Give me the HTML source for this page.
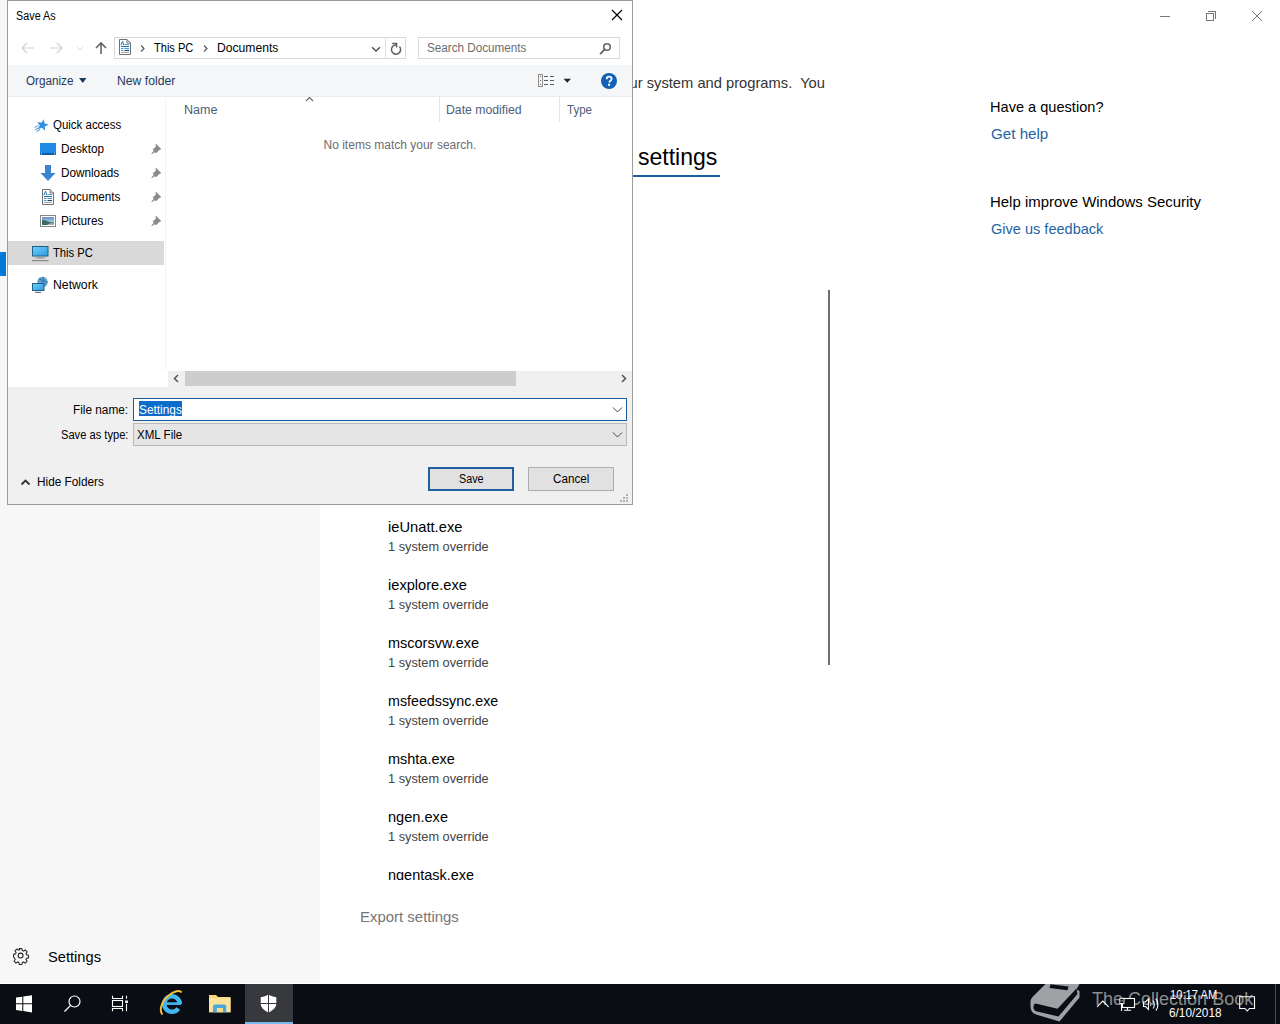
<!DOCTYPE html>
<html><head><meta charset="utf-8">
<style>
*{margin:0;padding:0;box-sizing:border-box}
html,body{width:1280px;height:1024px;overflow:hidden;background:#fff;font-family:"Liberation Sans",sans-serif}
.a{position:absolute}
.t{position:absolute;white-space:pre;line-height:1;transform-origin:0 0;font-family:"Liberation Sans",sans-serif}
svg{position:absolute;overflow:visible}
</style></head><body>
<!-- ============ Settings app ============ -->
<div class="a" style="left:0;top:0;width:320px;height:983px;background:#f7f7f7"></div>
<div class="a" style="left:0;top:252px;width:6px;height:24px;background:#0078d7"></div>
<!-- window controls -->
<div class="a" style="left:1160px;top:16px;width:10px;height:1px;background:#777"></div>
<div class="a" style="left:1206px;top:13px;width:8px;height:8px;border:1px solid #777"></div>
<div class="a" style="left:1208px;top:11px;width:8px;height:8px;border-top:1px solid #777;border-right:1px solid #777"></div>
<svg style="left:1252px;top:11px" width="10" height="10"><path d="M0 0L10 10M10 0L0 10" stroke="#777" stroke-width="1"/></svg>
<!-- heading underline -->
<div class="a" style="left:632px;top:175px;width:88px;height:2px;background:#1b5fa3"></div>
<!-- scrollbar -->
<div class="a" style="left:828px;top:290px;width:2px;height:375px;background:#6d6d6d"></div>
<!-- gear -->
<svg style="left:13.3px;top:948.2px" width="15.2" height="15.2" viewBox="0 0 16 16">
<path d="M6.6 0.6h2.8l0.4 2.1 1.3 0.6 1.8-1.2 2 2-1.2 1.8 0.6 1.3 2.1 0.4v2.8l-2.1 0.4-0.6 1.3 1.2 1.8-2 2-1.8-1.2-1.3 0.6-0.4 2.1H6.6l-0.4-2.1-1.3-0.6-1.8 1.2-2-2 1.2-1.8-0.6-1.3L0.6 9.4V6.6l2.1-0.4 0.6-1.3L2.1 3.1l2-2 1.8 1.2 1.3-0.6z" fill="none" stroke="#222" stroke-width="1.1" stroke-linejoin="round"/>
<circle cx="8" cy="8" r="2.6" fill="none" stroke="#222" stroke-width="1.1"/>
</svg>
<div class="t" style="left:613.75px;top:74.5px;font-size:15px;color:#333;transform:scaleX(0.9807);">your system and programs.  You</div>
<div class="t" style="left:638.14px;top:145px;font-size:24px;color:#000;transform:scaleX(0.9594);">settings</div>
<div class="t" style="left:990.43px;top:99px;font-size:15px;color:#000;transform:scaleX(0.9721);">Have a question?</div>
<div class="t" style="left:991.24px;top:126px;font-size:15px;color:#1f63a6;transform:scaleX(1.0106);">Get help</div>
<div class="t" style="left:990.40px;top:194px;font-size:15px;color:#000;transform:scaleX(0.9960);">Help improve Windows Security</div>
<div class="t" style="left:991.27px;top:220.5px;font-size:15px;color:#1f63a6;transform:scaleX(0.9697);">Give us feedback</div>
<div class="t" style="left:387.62px;top:519px;font-size:15px;color:#000;transform:scaleX(0.9807);">ieUnatt.exe</div>
<div class="t" style="left:387.81px;top:540px;font-size:13px;color:#444;transform:scaleX(0.9811);">1 system override</div>
<div class="t" style="left:387.62px;top:577px;font-size:15px;color:#000;transform:scaleX(0.9756);">iexplore.exe</div>
<div class="t" style="left:387.81px;top:598px;font-size:13px;color:#444;transform:scaleX(0.9811);">1 system override</div>
<div class="t" style="left:387.63px;top:635px;font-size:15px;color:#000;transform:scaleX(0.9661);">mscorsvw.exe</div>
<div class="t" style="left:387.81px;top:656px;font-size:13px;color:#444;transform:scaleX(0.9811);">1 system override</div>
<div class="t" style="left:387.64px;top:693px;font-size:15px;color:#000;transform:scaleX(0.9516);">msfeedssync.exe</div>
<div class="t" style="left:387.81px;top:714px;font-size:13px;color:#444;transform:scaleX(0.9811);">1 system override</div>
<div class="t" style="left:387.63px;top:751px;font-size:15px;color:#000;transform:scaleX(0.9652);">mshta.exe</div>
<div class="t" style="left:387.81px;top:772px;font-size:13px;color:#444;transform:scaleX(0.9811);">1 system override</div>
<div class="t" style="left:387.63px;top:809px;font-size:15px;color:#000;transform:scaleX(0.9721);">ngen.exe</div>
<div class="t" style="left:387.81px;top:830px;font-size:13px;color:#444;transform:scaleX(0.9811);">1 system override</div>
<div class="t" style="left:387.63px;top:867px;font-size:15px;color:#000;transform:scaleX(0.9648);">ngentask.exe</div>
<div class="t" style="left:359.50px;top:909px;font-size:15px;color:#767676;transform:scaleX(0.9963);">Export settings</div>
<div class="t" style="left:48.11px;top:949px;font-size:15px;color:#000;transform:scaleX(0.9784);">Settings</div>
<div class="a" style="left:380px;top:880px;width:140px;height:20px;background:#fff"></div>

<!-- ============ Dialog ============ -->
<div class="a" style="left:7px;top:0;width:626px;height:505px;background:#fff;border:1px solid #9b9b9b"></div>
<!-- toolbar band -->
<div class="a" style="left:8px;top:65px;width:624px;height:32px;background:#f5f6f7;border-bottom:1px solid #eaeaea"></div>
<!-- close X -->
<svg style="left:612px;top:10px" width="10" height="10"><path d="M0 0L10 10M10 0L0 10" stroke="#000" stroke-width="1.2"/></svg>
<!-- back / forward / recent / up -->
<svg style="left:20px;top:40px" width="100" height="16">
<path d="M2 8H14M2 8L7 3M2 8L7 13" fill="none" stroke="#d2d2d2" stroke-width="1.2"/>
<path d="M30 8H42M42 8L37 3M42 8L37 13" fill="none" stroke="#d2d2d2" stroke-width="1.2"/>
<path d="M57 7l3 3 3-3" fill="none" stroke="#d8d8d8" stroke-width="1"/>
<path d="M81 14V3M76 8L81 3L86 8" fill="none" stroke="#666" stroke-width="1.6"/>
</svg>
<!-- address box -->
<div class="a" style="left:114px;top:37px;width:292px;height:22px;border:1px solid #d9d9d9;background:#fff"></div>
<div class="a" style="left:385px;top:38px;width:1px;height:20px;background:#e3e3e3"></div>
<svg style="left:119px;top:39px" width="12" height="16" viewBox="0 0 12 16">
<path d="M0.5 0.5H8L11.5 4V15.5H0.5Z" fill="#fff" stroke="#707070" stroke-width="1"/>
<path d="M8 0.5V4H11.5" fill="none" stroke="#707070" stroke-width="1"/>
<path d="M1.8 6.2L3.6 2.2 4.6 6.2" fill="none" stroke="#2f78b0" stroke-width="1"/>
<path d="M5.5 5.5H10M2 9.5H4.5M5.5 9.5H10M2 11.5H4.5" stroke="#4a9ad0" stroke-width="1"/>
<path d="M2 7.5H10" stroke="#2a6f9e" stroke-width="1.1"/>
<path d="M5.5 11.5H10" stroke="#1d3f66" stroke-width="1.1"/>
<path d="M2 13.5H10" stroke="#8a8a8a" stroke-width="0.8"/>
</svg>
<svg style="left:139px;top:44px" width="80" height="10">
<path d="M2 1.5l3 3-3 3" fill="none" stroke="#555" stroke-width="1.2"/>
<path d="M65 1.5l3 3-3 3" fill="none" stroke="#555" stroke-width="1.2"/>
</svg>
<svg style="left:370px;top:44px" width="12" height="10" viewBox="370 44 12 10"><path d="M372 47.2L376 51 380 47.2" fill="none" stroke="#555" stroke-width="1.5"/></svg>
<svg style="left:385px;top:37px" width="20" height="20" viewBox="385 37 20 20">
<path d="M396 45A4.6 4.6 0 1 0 399.5 46.6" fill="none" stroke="#5f5f5f" stroke-width="1.5"/>
<path d="M392.2 43.6H396.6V47.6" fill="none" stroke="#5f5f5f" stroke-width="1.5"/>
</svg>
<!-- search box -->
<div class="a" style="left:418px;top:37px;width:202px;height:22px;border:1px solid #d9d9d9;background:#fff"></div>
<svg style="left:596px;top:40px" width="16" height="16" viewBox="596 40 16 16"><circle cx="607" cy="47" r="3.3" fill="none" stroke="#666" stroke-width="1.6"/><path d="M604.7 49.3L600.6 53.6" stroke="#666" stroke-width="1.9" stroke-linecap="round"/></svg>
<!-- toolbar items -->
<svg style="left:79px;top:78px" width="8" height="6"><path d="M0 0H7.5L3.75 5z" fill="#1e395b"/></svg>
<svg style="left:530px;top:66px" width="50" height="30" viewBox="530 66 50 30">
<rect x="538.5" y="74.5" width="4" height="12" fill="none" stroke="#8f8f8f" stroke-width="1"/>
<path d="M540 76.5h1M540 80.5h1M540 84.5h1" stroke="#666" stroke-width="1"/>
<path d="M544 76.5h4M550 76.5h4M544 80.5h4M550 80.5h4M544 84.5h4M550 84.5h4" stroke="#5f5f5f" stroke-width="1"/>
<path d="M563.5 78.8H571L567.25 82.8z" fill="#1b2636"/>
</svg>
<svg style="left:601px;top:73px" width="16" height="16" viewBox="0 0 16 16"><circle cx="8" cy="8" r="8" fill="#0f62b8"/>
<path d="M5.6 6.2c0-1.5 1-2.5 2.5-2.5s2.5 0.9 2.5 2.2c0 1.8-2.3 1.9-2.3 3.7" fill="none" stroke="#fff" stroke-width="1.8"/><rect x="7" y="10.8" width="2.1" height="2" fill="#fff"/></svg>
<!-- column headers -->
<svg style="left:305px;top:96px" width="10" height="6"><path d="M1 5L4.5 1.5 8 5" fill="none" stroke="#666" stroke-width="1.1"/></svg>
<div class="a" style="left:439px;top:97px;width:1px;height:25px;background:#e5e5e5"></div>
<div class="a" style="left:559px;top:97px;width:1px;height:25px;background:#e5e5e5"></div>
<!-- nav pane separator -->
<div class="a" style="left:165px;top:100px;width:1px;height:271px;background:#f3f3f3"></div>
<!-- nav icons -->
<svg style="left:34px;top:119px" width="15" height="13" viewBox="0 0 15 13">
<path d="M9.79 0.14 L10.51 4.39 L14.67 5.55 L10.84 7.55 L11.02 11.86 L7.94 8.84 L3.89 10.35 L5.81 6.48 L3.13 3.10 L7.40 3.73Z" fill="#2f8fe2"/>
<path d="M0.5 8.5L4.5 6.5M1 10.8L5 8.8M2.5 12.5L6 10.5" stroke="#5aa8ea" stroke-width="1.1"/>
</svg>
<svg style="left:40px;top:143px" width="16" height="12" viewBox="0 0 16 12"><rect x="0" y="0" width="16" height="12" fill="#1e8ae6"/><rect x="0" y="10" width="16" height="2" fill="#0e5ea8"/><rect x="1" y="10.5" width="1" height="1" fill="#fff"/><rect x="14" y="10.5" width="1" height="1" fill="#fff"/></svg>
<svg style="left:40px;top:165px" width="16" height="17" viewBox="0 0 16 17"><path d="M5 0h6v8h4.5L8 16 0.5 8H5z" fill="#3b84d0"/></svg>
<svg style="left:42px;top:189px" width="12" height="16" viewBox="0 0 12 16">
<path d="M0.5 0.5H8L11.5 4V15.5H0.5Z" fill="#fff" stroke="#707070" stroke-width="1"/>
<path d="M8 0.5V4H11.5" fill="none" stroke="#707070" stroke-width="1"/>
<path d="M1.8 6.2L3.6 2.2 4.6 6.2" fill="none" stroke="#2f78b0" stroke-width="1"/>
<path d="M5.5 5.5H10M2 9.5H4.5M5.5 9.5H10M2 11.5H4.5" stroke="#4a9ad0" stroke-width="1"/>
<path d="M2 7.5H10" stroke="#2a6f9e" stroke-width="1.1"/>
<path d="M5.5 11.5H10" stroke="#1d3f66" stroke-width="1.1"/>
<path d="M2 13.5H10" stroke="#8a8a8a" stroke-width="0.8"/>
</svg>
<svg style="left:40px;top:215px" width="16" height="12" viewBox="0 0 16 12">
<defs><linearGradient id="sky" x1="0" y1="0" x2="0" y2="1"><stop offset="0" stop-color="#6a8cc8"/><stop offset="1" stop-color="#c8eef8"/></linearGradient></defs>
<rect x="0.5" y="0.5" width="15" height="11" fill="#fff" stroke="#80858c"/>
<rect x="2" y="2" width="12" height="8" fill="url(#sky)"/>
<path d="M2 5.2c2-0.8 4 0.2 6 1.2 2 0.6 4 0.8 6 1V10H2z" fill="#3e6a64"/>
<path d="M7 10c2-1.5 4-1.8 7-1.6V10z" fill="#a9b6b8"/>
</svg>
<svg style="left:150px;top:143px" width="12" height="84">
<g fill="#8a8a8a" stroke="#8a8a8a">
<path d="M6 1l5 5-2 1-3 3-1-1L1.5 11l2.5-3.5-1-1 3-3z" stroke-width="0.5"/>
<path d="M6 25l5 5-2 1-3 3-1-1L1.5 35l2.5-3.5-1-1 3-3z" stroke-width="0.5"/>
<path d="M6 49l5 5-2 1-3 3-1-1L1.5 59l2.5-3.5-1-1 3-3z" stroke-width="0.5"/>
<path d="M6 73l5 5-2 1-3 3-1-1L1.5 83l2.5-3.5-1-1 3-3z" stroke-width="0.5"/>
</g></svg>
<!-- This PC selection -->
<div class="a" style="left:8px;top:241px;width:156px;height:24px;background:#d9d9d9"></div>
<svg style="left:31px;top:245px" width="18" height="17" viewBox="0 0 18 17">
<defs><linearGradient id="scr" x1="0" y1="0" x2="1" y2="1"><stop offset="0" stop-color="#6fd0f8"/><stop offset="1" stop-color="#2b9be0"/></linearGradient></defs>
<rect x="1.5" y="1.5" width="15.5" height="9.5" fill="url(#scr)" stroke="#1f5f88" stroke-width="1"/>
<ellipse cx="9.2" cy="12.8" rx="5.5" ry="0.7" fill="#9a9a9a"/>
<rect x="1" y="15" width="16.5" height="1.2" fill="#8a8a8a"/>
</svg>
<svg style="left:31px;top:276px" width="18" height="18" viewBox="0 0 18 18">
<circle cx="11.5" cy="6" r="5.2" fill="#5d9fcc"/>
<path d="M8 2.5c1.5 0.5 2.5 2 4.5 2.5s3 0.5 4 2M12.5 1c-0.8 1.5 0 3-0.8 5" fill="none" stroke="#2f6c9a" stroke-width="1"/>
<rect x="1.5" y="7.5" width="11.5" height="7" fill="url(#scr)" stroke="#1f5f88" stroke-width="1"/>
<rect x="4" y="15.8" width="6" height="1" fill="#4f5f6a"/>
</svg>
<!-- h scrollbar -->
<div class="a" style="left:168px;top:371px;width:464px;height:16px;background:#f0f0f0"></div>
<div class="a" style="left:185px;top:371px;width:331px;height:15px;background:#cdcdcd"></div>
<svg style="left:172px;top:374px" width="456" height="10">
<path d="M6 1L2.5 4.5 6 8" fill="none" stroke="#555" stroke-width="1.5"/>
<path d="M450 1L453.5 4.5 450 8" fill="none" stroke="#555" stroke-width="1.5"/>
</svg>
<!-- form -->
<div class="a" style="left:8px;top:387px;width:624px;height:117px;background:#f0f0f0"></div>
<div class="a" style="left:133px;top:398px;width:494px;height:23px;background:#fff;border:1px solid #1f5e9e"></div>
<div class="a" style="left:139px;top:401px;width:43px;height:15px;background:#0b6ccc"></div>
<svg style="left:612px;top:406px" width="12" height="8"><path d="M1 1.5l4.5 4.5L10 1.5" fill="none" stroke="#444" stroke-width="1"/></svg>
<div class="a" style="left:133px;top:423px;width:494px;height:23px;background:#e5e5e5;border:1px solid #b9b9b9"></div>
<svg style="left:612px;top:431px" width="12" height="8"><path d="M1 1.5l4.5 4.5L10 1.5" fill="none" stroke="#444" stroke-width="1"/></svg>
<svg style="left:20px;top:478px" width="12" height="8"><path d="M1.5 6.5L5.5 2.5 9.5 6.5" fill="none" stroke="#333" stroke-width="1.8"/></svg>
<div class="a" style="left:428px;top:467px;width:86px;height:24px;background:#e1e1e1;border:2px solid #1f5fa2"></div>
<div class="a" style="left:528px;top:467px;width:86px;height:24px;background:#e1e1e1;border:1px solid #adadad"></div>
<svg style="left:620px;top:494px" width="10" height="10">
<g fill="#b0b0b0"><rect x="6" y="0" width="2" height="2"/><rect x="3" y="3" width="2" height="2"/><rect x="6" y="3" width="2" height="2"/><rect x="0" y="6" width="2" height="2"/><rect x="3" y="6" width="2" height="2"/><rect x="6" y="6" width="2" height="2"/></g>
</svg>
<div class="t" style="left:16.07px;top:10px;font-size:12px;color:#000;transform:scaleX(0.9008);">Save As</div>
<div class="t" style="left:154.28px;top:42px;font-size:12px;color:#000;transform:scaleX(0.9216);">This PC</div>
<div class="t" style="left:216.53px;top:42px;font-size:12px;color:#000;transform:scaleX(1.0106);">Documents</div>
<div class="t" style="left:426.73px;top:42px;font-size:12px;color:#6d6d6d;transform:scaleX(0.9733);">Search Documents</div>
<div class="t" style="left:26.03px;top:75px;font-size:12px;color:#1e395b;transform:scaleX(0.9733);">Organize</div>
<div class="t" style="left:116.52px;top:75px;font-size:12px;color:#1e395b;transform:scaleX(1.0170);">New folder</div>
<div class="t" style="left:184.00px;top:104px;font-size:12px;color:#4c607a;transform:scaleX(1.0452);">Name</div>
<div class="t" style="left:445.52px;top:104px;font-size:12px;color:#4c607a;transform:scaleX(1.0206);">Date modified</div>
<div class="t" style="left:566.77px;top:104px;font-size:12px;color:#4c607a;transform:scaleX(0.9628);">Type</div>
<div class="t" style="left:323.54px;top:139px;font-size:12px;color:#6d6d6d;">No items match your search.</div>
<div class="t" style="left:52.94px;top:119px;font-size:12px;color:#000;transform:scaleX(0.9558);">Quick access</div>
<div class="t" style="left:60.76px;top:143px;font-size:12px;color:#000;transform:scaleX(0.9782);">Desktop</div>
<div class="t" style="left:60.76px;top:167px;font-size:12px;color:#000;transform:scaleX(0.9782);">Downloads</div>
<div class="t" style="left:60.76px;top:191px;font-size:12px;color:#000;transform:scaleX(0.9782);">Documents</div>
<div class="t" style="left:60.76px;top:215px;font-size:12px;color:#000;transform:scaleX(0.9782);">Pictures</div>
<div class="t" style="left:53.18px;top:247px;font-size:12px;color:#000;transform:scaleX(0.9358);">This PC</div>
<div class="t" style="left:52.72px;top:279px;font-size:12px;color:#000;transform:scaleX(1.0192);">Network</div>
<div class="t" style="left:73.46px;top:404px;font-size:12px;color:#000;transform:scaleX(0.9832);">File name:</div>
<div class="t" style="left:61.05px;top:429px;font-size:12px;color:#000;transform:scaleX(0.9273);">Save as type:</div>
<div class="t" style="left:139.03px;top:404px;font-size:12px;color:#fff;transform:scaleX(0.9878);">Settings</div>
<div class="t" style="left:136.77px;top:429px;font-size:12px;color:#000;transform:scaleX(0.9642);">XML File</div>
<div class="t" style="left:37.46px;top:476px;font-size:12px;color:#000;transform:scaleX(0.9834);">Hide Folders</div>
<div class="t" style="left:458.82px;top:473px;font-size:12px;color:#000;transform:scaleX(0.8983);">Save</div>
<div class="t" style="left:553.17px;top:473px;font-size:12px;color:#000;transform:scaleX(0.9720);">Cancel</div>

<!-- ============ Taskbar ============ -->
<div class="a" style="left:0;top:984px;width:1280px;height:40px;background:#0b0d14"></div>
<div class="a" style="left:245px;top:984px;width:48px;height:40px;background:#38393d"></div>
<div class="a" style="left:245px;top:1022px;width:48px;height:2px;background:#76b9ed"></div>
<div class="a" style="left:1275px;top:984px;width:1px;height:40px;background:#4a4c55"></div>
<!-- windows logo -->
<svg style="left:15px;top:995px" width="18" height="18" viewBox="0 0 18 18">
<path d="M1 2.6L7.3 1.7V8.3H1zM8.3 1.5L17 0.2V8.3H8.3zM1 9.3H7.3V15.9L1 15zM8.3 9.3H17V17.4L8.3 16.1z" fill="#fff"/>
</svg>
<!-- search -->
<svg style="left:62px;top:994px" width="20" height="20"><circle cx="12.5" cy="7.5" r="5.5" fill="none" stroke="#fff" stroke-width="1.2"/><path d="M8.6 11.4L2.5 17.5" stroke="#fff" stroke-width="1.3"/></svg>
<!-- task view -->
<svg style="left:108px;top:992px" width="24" height="22" viewBox="108 992 24 22">
<path d="M112.5 995.8V998.5H122.5V995.8M112.5 1011.2V1008.5H122.5V1011.2" fill="none" stroke="#fff" stroke-width="1.1"/>
<rect x="112.5" y="1000.5" width="10" height="6" fill="none" stroke="#fff" stroke-width="1.1"/>
<path d="M126.5 995.8V998.8M126.5 1004V1011.2" stroke="#fff" stroke-width="1.1"/>
<rect x="125.2" y="1000.5" width="2.7" height="2.6" fill="#fff"/>
</svg>
<!-- IE -->
<svg style="left:155px;top:988px" width="32" height="32" viewBox="155 988 32 32">
<path d="M179.75 1004A7.75 7.75 0 1 0 178.35 1008.45" fill="none" stroke="#42b8ee" stroke-width="4.5"/>
<rect x="165" y="1002.3" width="16" height="2.6" fill="#42b8ee"/>
<path d="M162.5 1014.5C158.5 1010 162 1001 168 996S180 989.5 181.5 992.5" fill="none" stroke="#f0c13a" stroke-width="1.9"/>
</svg>
<!-- explorer -->
<svg style="left:209px;top:994px" width="22" height="19" viewBox="209 994 22 19">
<path d="M209 995H216L218 997H230.5V1012.2H209z" fill="#f5d576"/>
<path d="M209 998H230.5V1012.2H209z" fill="#fbe49a"/>
<path d="M213 1012.2V1006.5Q213 1004.6 215 1004.6H224.3Q226.3 1004.6 226.3 1006.5V1012.2H222.8V1008H216.9V1012.2z" fill="#4aa6dc"/>
<rect x="216.9" y="1008" width="5.9" height="4.2" fill="#f8dd8a"/>
</svg>
<!-- defender shield -->
<svg style="left:258px;top:992px" width="22" height="22" viewBox="258 992 22 22">
<path d="M268.5 994.5C266 996 264 996.8 260.7 997.2V1003.5C260.7 1007.5 264 1010.5 268.5 1012.5 273 1010.5 276.3 1007.5 276.3 1003.5V997.2C273 996.8 271 996 268.5 994.5z" fill="#fff"/>
<path d="M268.5 994V1013M260 1003.5H277" stroke="#38393d" stroke-width="1"/>
</svg>
<!-- watermark book -->
<svg style="left:1020px;top:980px" width="80" height="44" viewBox="1020 980 80 44">
<path d="M1045.5 984H1079.5L1076.5 989.5 1079.5 991V997.5L1059.5 1021.5 1036 1014.5C1032 1013 1030.5 1010 1030.5 1006V1002C1030.5 999.5 1031.5 998 1033 996.5z" fill="#a0a1a5"/>
<path d="M1035.5 1003.5L1057.5 1008.8 1076.5 988.5 1077.5 994 1058.5 1016.5 1037 1011.5C1034.5 1011 1033.5 1009 1033.5 1007.5 1033.5 1005 1034 1004 1035.5 1003.5z" fill="#0b0d14"/>
<path d="M1050.5 984.3L1068.5 986.5 1067.5 990.3 1049.5 988z" fill="#0b0d14"/>
</svg>
<div class="t" style="left:1092.14px;top:989px;font-size:19px;color:#8c8c8c;transform:scaleX(0.9479);">The Collection Book</div>
<!-- tray icons -->
<svg style="left:1090px;top:984px" width="80" height="40" viewBox="1090 984 80 40">
<path d="M1097 1006.8L1102.8 1001 1108.7 1006.8" fill="none" stroke="#fff" stroke-width="1.1"/>
<rect x="1122.5" y="998.5" width="12" height="9" fill="#0b0d14" stroke="#fff" stroke-width="1.1"/>
<path d="M1121.5 1004V1011M1124 1010.3H1131M1127.5 1007.5V1010" stroke="#fff" stroke-width="1.1"/>
<rect x="1119.8" y="998.3" width="4.2" height="5.2" fill="#0b0d14" stroke="#fff" stroke-width="0.9"/>
<path d="M1120.8 1000.3l1 1 1-1" fill="none" stroke="#fff" stroke-width="0.7"/>
<path d="M1143.5 1002V1006.5H1145.5L1148.5 1009.5V998.8L1145.5 1002z" fill="none" stroke="#fff" stroke-width="1.1"/>
<path d="M1150.5 1002.5c0.8 1 0.8 2.5 0 3.5M1153 1000.5c1.8 2 1.8 6 0 8M1155.8 998.5c2.8 3 2.8 9 0 12" fill="none" stroke="#fff" stroke-width="1.1"/>
</svg>
<svg style="left:1238px;top:995px" width="18" height="18" viewBox="1238 995 18 18">
<path d="M1239.7 996.7H1254.5V1008.5H1249.5L1247.2 1011 1244.9 1008.5H1239.7z" fill="none" stroke="#fff" stroke-width="1.1"/>
</svg>
<div class="t" style="left:1170.47px;top:988.5px;font-size:12px;color:#fff;transform:scaleX(0.9326);">10:17 AM</div>
<div class="t" style="left:1168.81px;top:1006.5px;font-size:12px;color:#fff;transform:scaleX(0.9837);">6/10/2018</div>
</body></html>
